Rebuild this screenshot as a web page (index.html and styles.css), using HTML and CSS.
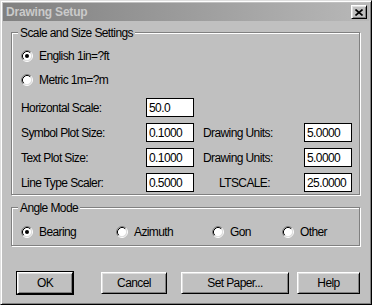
FILE: index.html
```html
<!DOCTYPE html>
<html>
<head>
    <title>Drawing Setup</title>
    <link rel="stylesheet" href="styles.css">
</head>
<body>
    <!-- classic radio button, reused below -->
    <svg class="defs" width="0" height="0">
        <defs>
            <g id="radio">
                <circle cx="6" cy="6" r="4.5" fill="#fff"/>
                <path d="M2.11 9.89 A5.5 5.5 0 0 1 9.89 2.11" stroke="#808080" fill="none"/>
                <path d="M9.89 2.11 A5.5 5.5 0 0 1 2.11 9.89" stroke="#fff" fill="none"/>
                <path d="M2.82 9.18 A4.5 4.5 0 0 1 9.18 2.82" stroke="#000" fill="none"/>
                <path d="M9.18 2.82 A4.5 4.5 0 0 1 2.82 9.18" stroke="#dfdfdf" fill="none"/>
            </g>
        </defs>
    </svg>

    <div class="window">
        <div class="title-bar">
            <span class="title">Drawing Setup</span>
            <button class="close-button">
                <svg width="8" height="7" viewBox="0 0 8 7">
                    <path d="M0.5 0.5 L7.5 6.5 M7.5 0.5 L0.5 6.5" stroke="#000" stroke-width="1.6"/>
                </svg>
            </button>
        </div>

        <div class="dialog-body">
            <div class="group scale-group">
                <div class="group-title">Scale and Size Settings</div>

                <label class="radio first-radio">
                    <svg width="12" height="12"><use href="#radio"/><circle cx="6" cy="6" r="2" fill="#000"/></svg>
                    English 1in=?ft
                </label>
                <label class="radio">
                    <svg width="12" height="12"><use href="#radio"/></svg>
                    Metric 1m=?m
                </label>

                <div class="scale-grid">
                    <label>Horizontal Scale:</label>
                    <input type="text" value="50.0">
                    <span></span>
                    <span></span>

                    <label>Symbol Plot Size:</label>
                    <input type="text" value="0.1000">
                    <label class="right-label">Drawing Units:</label>
                    <input type="text" value="5.0000">

                    <label>Text Plot Size:</label>
                    <input type="text" value="0.1000">
                    <label class="right-label">Drawing Units:</label>
                    <input type="text" value="5.0000">

                    <label>Line Type Scaler:</label>
                    <input type="text" value="0.5000">
                    <label class="right-label ltscale">LTSCALE:</label>
                    <input type="text" value="25.0000">
                </div>
            </div>

            <div class="group angle-group">
                <div class="group-title">Angle Mode</div>
                <div class="angle-row">
                    <label class="radio">
                        <svg width="12" height="12"><use href="#radio"/><circle cx="6" cy="6" r="2" fill="#000"/></svg>
                        Bearing
                    </label>
                    <label class="radio">
                        <svg width="12" height="12"><use href="#radio"/></svg>
                        Azimuth
                    </label>
                    <label class="radio">
                        <svg width="12" height="12"><use href="#radio"/></svg>
                        Gon
                    </label>
                    <label class="radio">
                        <svg width="12" height="12"><use href="#radio"/></svg>
                        Other
                    </label>
                </div>
            </div>

            <div class="button-row">
                <button class="button default-button ok-button">OK</button>
                <button class="button cancel-button">Cancel</button>
                <button class="button paper-button">Set Paper...</button>
                <button class="button help-button">Help</button>
            </div>
        </div>
    </div>
</body>
</html>
```

FILE: styles.css
```css
body {
    margin: 0;
    font-family: "Liberation Sans", Arial, sans-serif;
    font-size: 12px;
    letter-spacing: -0.6px;
    color: #000;
    background-color: #c0c0c0;
}

.defs {
    position: absolute;
    width: 0;
    height: 0;
}

.window {
    width: 372px;
    height: 305px;
    box-sizing: border-box;
    padding: 2px;
    border: 1px solid;
    border-color: #dfdfdf #000 #000 #dfdfdf;
    box-shadow: inset 1px 1px 0 #fff, inset -1px -1px 0 #808080;
    background-color: #c0c0c0;
}

.title-bar {
    height: 18px;
    display: flex;
    align-items: center;
    justify-content: space-between;
    padding: 0 2px 0 3px;
    background: linear-gradient(to right, #808080, #b8b8b8);
}

.title {
    font-weight: bold;
    font-size: 12px;
    letter-spacing: -0.2px;
    line-height: 18px;
    color: #cacaca;
}

.close-button {
    width: 16px;
    height: 14px;
    padding: 0;
    display: flex;
    align-items: center;
    justify-content: center;
    border: 1px solid;
    border-color: #fff #000 #000 #fff;
    box-shadow: inset 1px 1px 0 #dfdfdf, inset -1px -1px 0 #808080;
    background-color: #c0c0c0;
}

.dialog-body {
    padding: 11px 9px 0 8px;
}

/* etched group box */
.group {
    border: 1px solid #808080;
    box-shadow: 1px 1px 0 #fff, inset 1px 1px 0 #fff;
    padding: 0 0 0 9px;
}

.group-title {
    width: max-content;
    margin: -7px 0 0 -3px;
    padding: 0 2px;
    line-height: 14px;
    background-color: #c0c0c0;
}

.scale-group {
    padding-bottom: 2px;
}

.radio {
    display: flex;
    align-items: center;
    height: 24px;
}

.radio svg {
    margin-right: 6px;
    flex-shrink: 0;
}

.first-radio {
    margin-top: 4px;
}

.scale-grid {
    display: grid;
    grid-template-columns: 125px 48px 110px 48px;
    grid-auto-rows: 19px;
    row-gap: 6px;
    align-items: center;
    margin-top: 6px;
}

.scale-grid input[type="text"] {
    width: 48px;
    height: 19px;
    box-sizing: border-box;
    margin: 0;
    padding: 0 2px;
    border: 1px solid #000;
    background-color: #fff;
    font-family: inherit;
    font-size: 12px;
    letter-spacing: -0.6px;
    color: #000;
}

.right-label {
    padding-left: 9px;
}

.right-label.ltscale {
    padding-left: 25px;
}

.angle-group {
    margin-top: 12px;
    padding-bottom: 3px;
}

.angle-row {
    display: grid;
    grid-template-columns: 95px 96px 70px auto;
    margin-top: 7px;
}

.angle-row .radio {
    height: 20px;
}

.button-row {
    display: flex;
    margin-top: 26px;
}

.button {
    height: 22px;
    padding: 0;
    border: 1px solid;
    border-color: #fff #000 #000 #fff;
    box-shadow: inset 1px 1px 0 #dfdfdf, inset -1px -1px 0 #808080;
    background-color: #c0c0c0;
    font-family: inherit;
    font-size: 12px;
    letter-spacing: -0.6px;
    color: #000;
}

.default-button {
    outline: 1px solid #000;
}

.ok-button {
    width: 56px;
    margin-left: 6px;
}

.cancel-button {
    width: 66px;
    margin-left: 28px;
}

.paper-button {
    width: 108px;
    margin-left: 14px;
}

.help-button {
    width: 63px;
    margin-left: 8px;
}
```
